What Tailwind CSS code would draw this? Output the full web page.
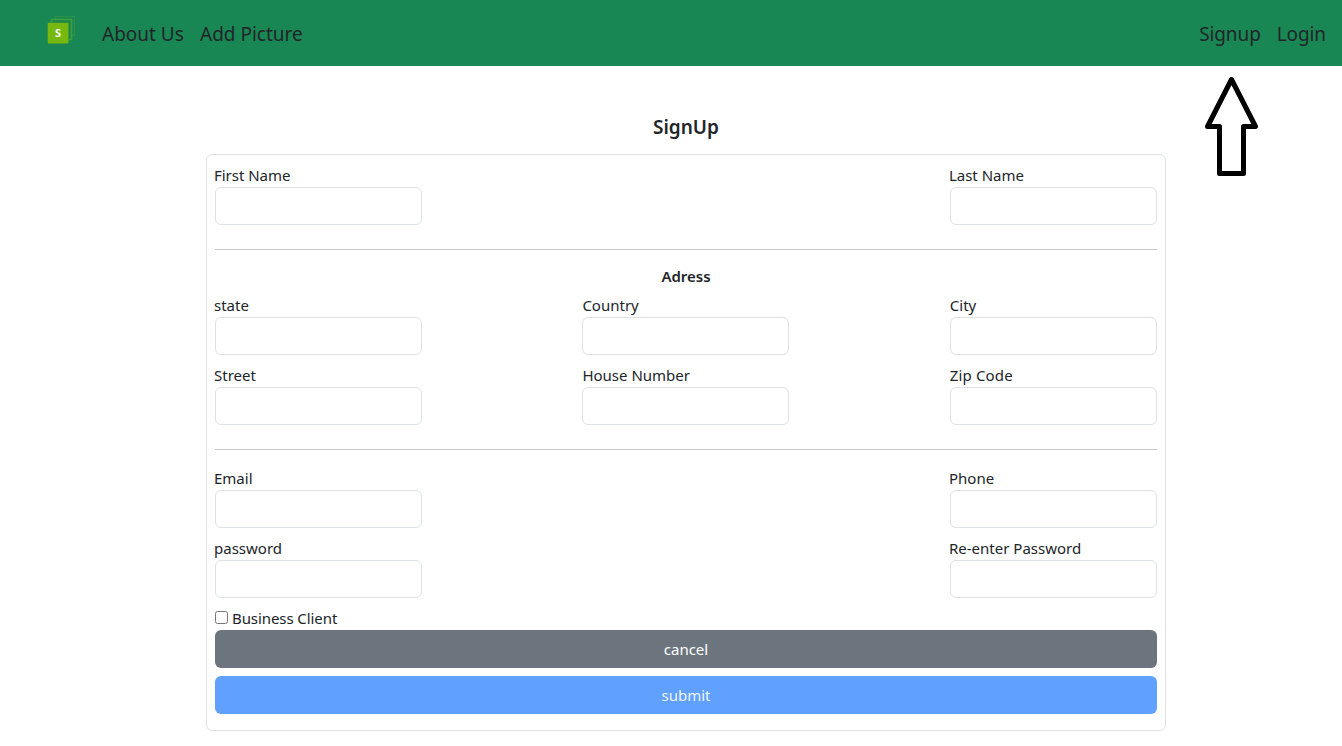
<!DOCTYPE html>
<html lang="en">
<head>
<meta charset="utf-8">
<title>SignUp</title>
<script src="https://cdn.jsdelivr.net/npm/@tailwindcss/browser@4"></script>
</head>
<body class="h-[746px] overflow-hidden bg-white font-['Noto_Sans','Open_Sans',sans-serif] text-[15px] leading-6 text-[#212529]">
<nav class="flex h-[66px] items-center bg-[#198754] pr-4 pl-[47px] text-[19px] leading-[30px]">
  <svg class="mr-[26px] -mt-[6px] shrink-0" width="29" height="30" viewBox="47 15 29 30" fill="none">
    <path d="M55.500 19V16.500H74.500V35.500H72" stroke="#2b9249" stroke-width="1.200"/>
    <path d="M51.500 22.500V19.500H71.500V39.500H69" stroke="#459f34" stroke-width="1.500"/>
    <rect x="47.700" y="22.800" width="20.800" height="20.800" rx="1" fill="#76b80e"/>
    <text x="58.100" y="37.200" text-anchor="middle" font-family="Open Sans, sans-serif" font-size="11" font-weight="700" fill="#f4faea">S</text>
  </svg>
  <div class="flex gap-4 pt-0.5">
    <a class="w-[82px] whitespace-nowrap">About Us</a>
    <a class="whitespace-nowrap">Add Picture</a>
  </div>
  <div class="ml-auto flex gap-4 pt-0.5">
    <a class="tracking-[-0.1px]">Signup</a>
    <a class="tracking-[-0.1px]">Login</a>
  </div>
</nav>
<svg class="absolute top-[75px] left-[1203px]" width="57" height="104" viewBox="1203 75 57 104" fill="none">
  <path d="M1231.500 79.500L1255.500 126.500H1243.500V173.500H1219.500V126.500H1207.500Z" stroke="#000" stroke-width="5" stroke-linejoin="round"/>
</svg>
<main class="ml-[206px] w-[960px]">
  <h1 class="pt-[49px] pb-[15px] text-center text-[19px] leading-6 font-semibold">SignUp</h1>
  <form class="h-[577px] rounded-md border border-[#dee2e6] p-2">
    <div class="flex justify-between">
      <label class="flex w-[207px] flex-col"><span class="-ml-px tracking-[-0.03px]">First Name</span><input class="h-[38px] rounded-md border border-[#dee2e6]"></label>
      <label class="flex w-[207px] flex-col"><span class="-ml-px tracking-[-0.03px]">Last Name</span><input class="h-[38px] rounded-md border border-[#dee2e6]"></label>
    </div>
    <hr class="mt-6 mb-[15px] border-[#c8c9ca]">
    <h2 class="mb-1.5 text-center leading-[22px] font-semibold">Adress</h2>
    <div class="grid grid-cols-[207px_207px_207px] gap-x-[160.400px] gap-y-2">
      <label class="flex flex-col"><span class="-ml-px">state</span><input class="h-[38px] rounded-md border border-[#dee2e6]"></label>
      <label class="flex flex-col"><span>Country</span><input class="h-[38px] rounded-md border border-[#dee2e6]"></label>
      <label class="flex flex-col"><span>City</span><input class="h-[38px] rounded-md border border-[#dee2e6]"></label>
      <label class="flex flex-col"><span class="-ml-px">Street</span><input class="h-[38px] rounded-md border border-[#dee2e6]"></label>
      <label class="flex flex-col"><span>House Number</span><input class="h-[38px] rounded-md border border-[#dee2e6]"></label>
      <label class="flex flex-col"><span class="tracking-[0.15px]">Zip Code</span><input class="h-[38px] rounded-md border border-[#dee2e6]"></label>
    </div>
    <hr class="mt-6 mb-4 border-[#c8c9ca]">
    <div class="grid grid-cols-[207px_207px] justify-between gap-y-2">
      <label class="flex flex-col"><span class="-ml-px">Email</span><input class="h-[38px] rounded-md border border-[#dee2e6]"></label>
      <label class="flex flex-col"><span class="-ml-px">Phone</span><input class="h-[38px] rounded-md border border-[#dee2e6]"></label>
      <label class="flex flex-col"><span class="-ml-px">password</span><input type="password" class="h-[38px] rounded-md border border-[#dee2e6]"></label>
      <label class="flex flex-col"><span class="-ml-px">Re-enter Password</span><input type="password" class="h-[38px] rounded-md border border-[#dee2e6]"></label>
    </div>
    <label class="mt-2 flex h-6 gap-1"><input type="checkbox" class="mt-[5px] size-[13px]"><span class="tracking-[-0.08px]">Business Client</span></label>
    <button type="button" class="mb-2 block h-[38px] w-full rounded-md bg-[#6c757d] text-white">cancel</button>
    <button type="button" class="block h-[38px] w-full rounded-md bg-[#60a0fe] text-[#eff6ff]">submit</button>
  </form>
</main>
</body>
</html>
